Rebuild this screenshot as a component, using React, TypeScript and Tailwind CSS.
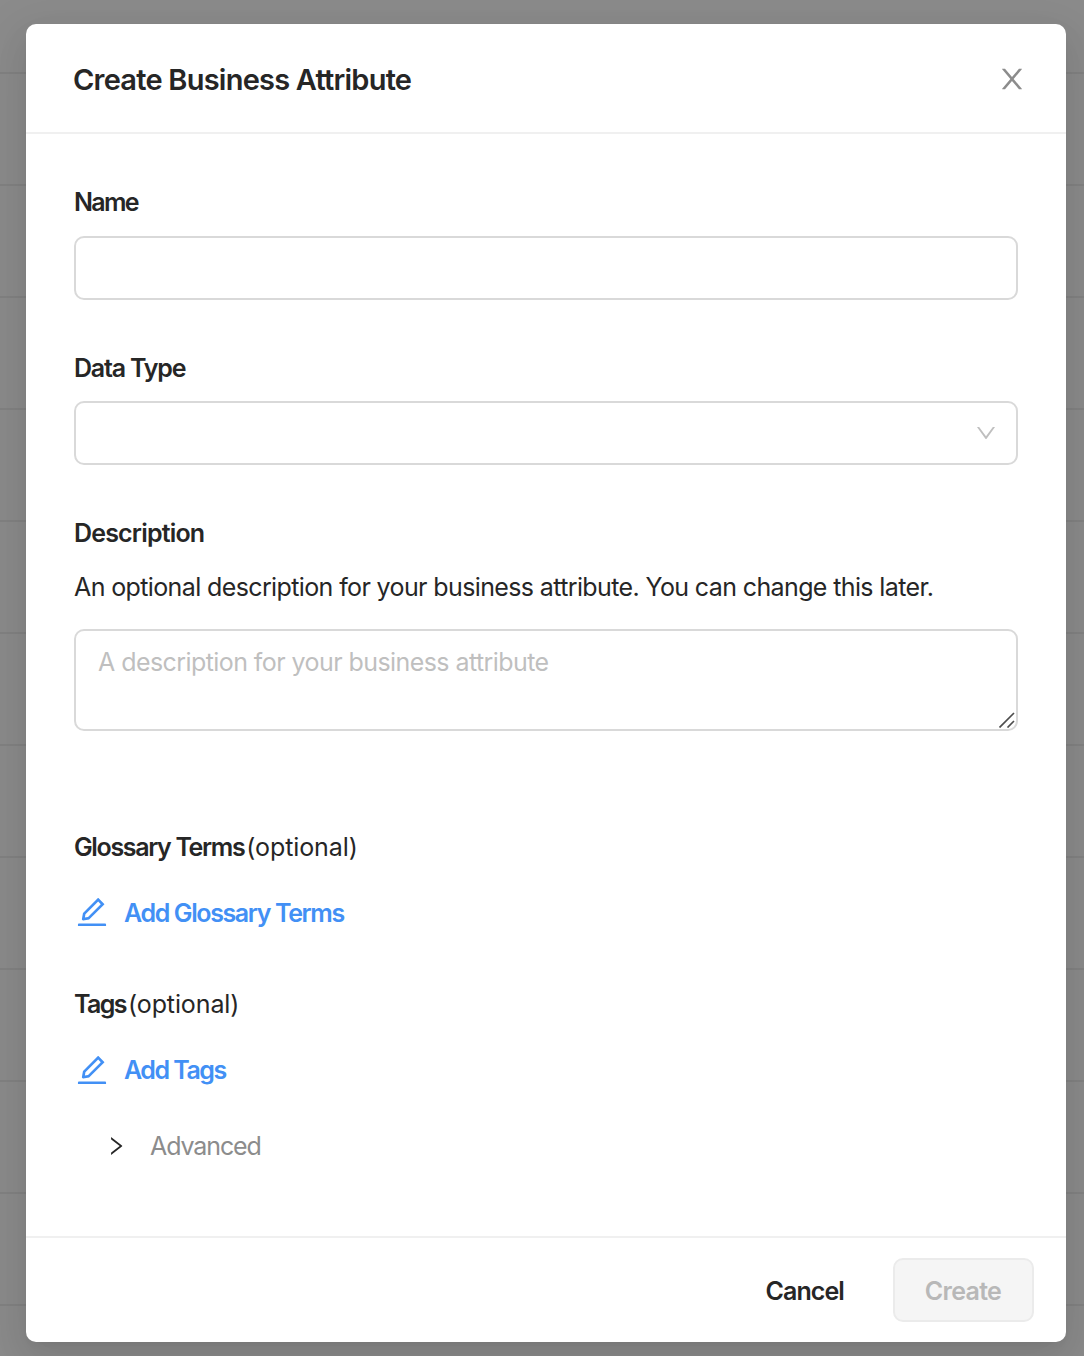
import type { ReactNode } from "react";

const CLOSE =
  "M563.8 512l262.5-312.9c4.4-5.2.7-13.1-6.1-13.1h-79.8c-4.7 0-9.2 2.1-12.3 5.7L511.6 449.8 295.1 191.7c-3-3.6-7.5-5.7-12.3-5.7H203c-6.8 0-10.5 7.9-6.1 13.1L459.4 512 196.9 824.9A7.95 7.95 0 00203 838h79.8c4.7 0 9.2-2.1 12.3-5.7l216.5-258.1 216.5 258.1c3 3.6 7.5 5.7 12.3 5.7h79.8c6.8 0 10.5-7.9 6.1-13.1L563.8 512z";
const DOWN =
  "M884 256h-75c-5.1 0-9.9 2.5-12.9 6.6L512 654.2 227.9 262.6c-3-4.1-7.8-6.6-12.9-6.6h-75c-6.5 0-10.3 7.4-6.5 12.7l352.6 486.1c12.8 17.6 39 17.6 51.7 0l352.6-486.1c3.9-5.3.1-12.7-6.4-12.7z";
const RIGHT =
  "M765.7 486.8L314.9 134.7A7.97 7.97 0 00302 141v77.3c0 4.9 2.3 9.6 6.1 12.6l360 281.1-360 281.1c-3.9 3-6.1 7.7-6.1 12.6V883c0 6.7 7.7 10.4 12.9 6.3l450.8-352.1a31.96 31.96 0 000-50.4z";
const EDIT =
  "M257.7 752c2 0 4-.2 6-.5L431.9 722c2-.4 3.9-1.3 5.3-2.8l423.9-423.9a9.96 9.96 0 000-14.1L694.9 114.9c-1.9-1.9-4.4-2.9-7.1-2.9s-5.2 1-7.1 2.9L256.8 538.8c-1.5 1.5-2.4 3.3-2.8 5.3l-29.5 168.2a33.5 33.5 0 009.4 29.8c6.6 6.4 14.9 9.9 23.8 9.9zm67.4-174.4L687.8 215l73.3 73.3-362.7 362.6-88.9 15.7 15.6-89zM880 836H144c-17.7 0-32 14.3-32 32v36c0 4.4 3.6 8 8 8h784c4.4 0 8-3.6 8-8v-36c0-17.7-14.3-32-32-32z";

function Icon({ d, className }: { d: string; className: string }) {
  return (
    <svg viewBox="0 0 1024 1024" fill="currentColor" aria-hidden="true" className={className}>
      <path d={d} />
    </svg>
  );
}

function Label({ children, className }: { children: ReactNode; className: string }) {
  return (
    <span className={`block h-10 shrink-0 text-[25px] leading-10 font-semibold whitespace-nowrap ${className}`}>
      {children}
    </span>
  );
}

function Optional() {
  return <span className="ml-[2px] text-[25px] leading-10 tracking-[-0.1px]">(optional)</span>;
}

export default function App() {
  return (
    <div className="relative h-[1356px] w-[1084px] overflow-hidden bg-[#8b8b8b] font-['Inter',sans-serif] text-[#262626]">
      <div className="flex h-full flex-col" aria-hidden="true">
        <div className="h-[74px] shrink-0 border-b-2 border-[#828282]" />
        {Array.from({ length: 11 }, (_, i) => (
          <div key={i} className="h-28 shrink-0 border-b-2 border-[#828282]" />
        ))}
      </div>
      <div
        role="dialog"
        className="absolute top-6 left-[26px] flex h-[1318px] w-[1040px] flex-col rounded-[10px] bg-white shadow-[0_6px_12px_-8px_rgba(0,0,0,0.12),0_12px_32px_0_rgba(0,0,0,0.08),0_18px_56px_16px_rgba(0,0,0,0.05)]"
      >
        <header className="flex h-[110px] shrink-0 items-center justify-between border-b-2 border-[#f0f0f0] pt-0.5 pr-[38px] pl-12">
          <h1 className="-ml-px pt-px text-[29px] font-semibold tracking-[-0.77px] whitespace-nowrap">
            Create Business Attribute
          </h1>
          <button aria-label="Close" className="text-[#8c8c8c]">
            <Icon d={CLOSE} className="size-8" />
          </button>
        </header>
        <main className="flex grow flex-col px-12 pt-12">
          <Label className="tracking-[-1.7px]">Name</Label>
          <input
            aria-label="Name"
            className="mt-[14px] h-16 shrink-0 rounded-[10px] border-2 border-[#d9d9d9] bg-white"
          />
          <Label className="mt-12 tracking-[-1.2px]">Data Type</Label>
          <button
            aria-label="Data Type"
            className="mt-[13px] flex h-16 shrink-0 items-center justify-end rounded-[10px] border-2 border-[#d9d9d9] pr-[18px] text-[#bfbfbf]"
          >
            <Icon d={DOWN} className="size-6" />
          </button>
          <Label className="mt-12 tracking-[-0.82px]">Description</Label>
          <p className="mt-[14px] h-10 text-[25px] leading-10 tracking-[-0.62px] whitespace-nowrap">
            An optional description for your business attribute. You can change this later.
          </p>
          <div className="relative mt-[22px] h-[102px] shrink-0 rounded-[10px] border-2 border-[#d9d9d9] px-[22px] pt-[11px] text-[25px] leading-10 tracking-[-0.57px] whitespace-nowrap text-[#bfbfbf]">
            A description for your business attribute
            <svg
              viewBox="0 0 16 16"
              className="absolute right-[1px] bottom-[1px] size-4"
              stroke="#4d4d4d"
              strokeWidth="1.7"
              fill="none"
            >
              <path d="M.5 15.5L15 1M8.5 15.5L15 9" />
            </svg>
          </div>
          <div className="mt-24 flex">
            <Label className="tracking-[-1.36px]">Glossary Terms</Label>
            <Optional />
          </div>
          <button className="mt-[26px] flex h-10 items-center text-[#4290f5]">
            <Icon d={EDIT} className="mb-0.5 size-9" />
            <Label className="ml-[14px] tracking-[-1.38px]">Add Glossary Terms</Label>
          </button>
          <div className="mt-[51px] flex">
            <Label className="tracking-[-1.6px]">Tags</Label>
            <Optional />
          </div>
          <button className="mt-[26px] flex h-10 items-center text-[#4290f5]">
            <Icon d={EDIT} className="size-9" />
            <Label className="ml-[14px] tracking-[-1.5px]">Add Tags</Label>
          </button>
          <button className="mt-9 ml-[30px] flex h-10 items-center">
            <Icon d={RIGHT} className="size-6" />
            <span className="ml-[22px] pt-px text-[25px] tracking-[-1.1px] text-[#8c8c8c]">Advanced</span>
          </button>
        </main>
        <footer className="flex h-[106px] shrink-0 items-center justify-end gap-[49px] border-t-2 border-[#f0f0f0] pr-8">
          <button className="pt-0.5">
            <Label className="tracking-[-0.9px]">Cancel</Label>
          </button>
          <button className="flex h-16 w-[141px] items-center justify-center rounded-[10px] border-2 border-[#ebebeb] bg-[#f5f5f5] pt-0.5 pr-px text-[#b8b8b8]">
            <Label className="tracking-[-0.7px]">Create</Label>
          </button>
        </footer>
      </div>
    </div>
  );
}
